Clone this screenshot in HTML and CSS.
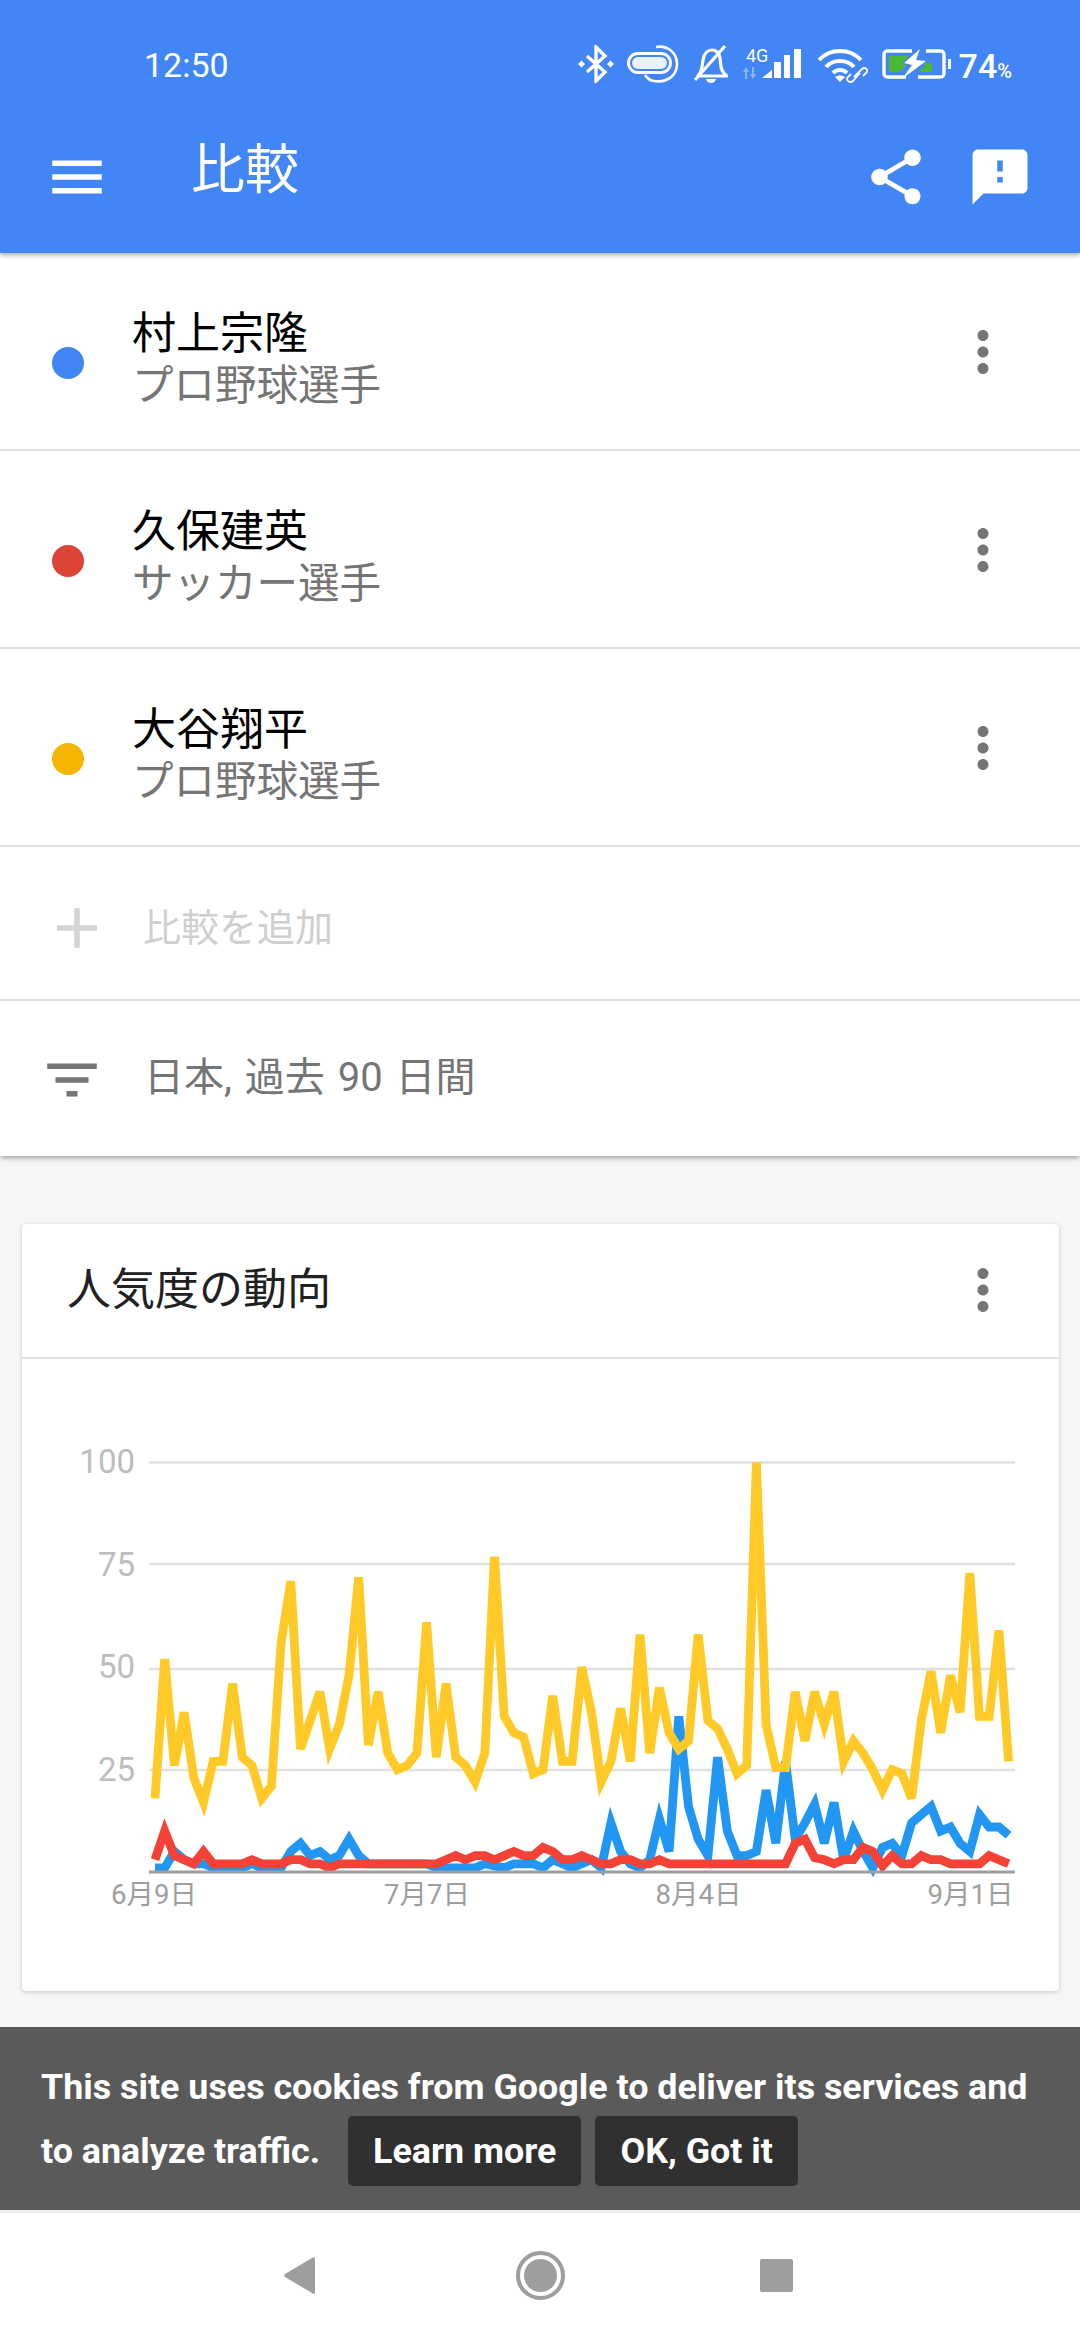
FILE: index.html
```html
<!DOCTYPE html>
<html lang="ja">
<head>
    <meta charset="utf-8">
    <title>比較</title>
    <link rel="stylesheet" href="styles.css">
</head>
<body>
<header class="appbar">
    <div class="status">
        <span class="clock">12:50</span>
        <div class="status-icons">
            <svg class="ic-bt" width="36" height="38" viewBox="0 0 36 38">
                <path d="M9 11 27 27 18 36V2L27 11 9 27" fill="none" stroke="#fff" stroke-width="3.4"/>
                <path d="M3.500 15.500 7 19 3.500 22.500 0 19zM32.500 15.500 36 19 32.500 22.500 29 19z" fill="#fff"/>
            </svg>
            <svg class="ic-pill" width="52" height="38" viewBox="0 0 52 38">
                <rect x="1.500" y="8.500" width="42" height="19" rx="9.500" fill="none" stroke="#fff" stroke-width="3"/>
                <rect x="5" y="12" width="35" height="12" rx="6" fill="#eaf1fe"/>
                <path d="M29 2C41 0 50 8 50 19S41 38 27 36C22 35.500 20 33 18 30" fill="none" stroke="#fff" stroke-width="2.600"/>
            </svg>
            <svg class="ic-bell" width="34" height="38" viewBox="0 0 34 38">
                <path d="M4 31C8 27 8 22 9 15 10 8 14 5 18 5 22 5 25 8 26 13L27 22C28 26 30 29 33 31Z" fill="none" stroke="#fff" stroke-width="3.200" stroke-linejoin="round"/>
                <path d="M1 35 31 1" stroke="#fff" stroke-width="3.200"/>
                <path d="M12 34H22C21 37 19 38 17 38 15 38 13 37 12 34Z" fill="#fff"/>
            </svg>
            <svg class="ic-signal" width="60" height="34" viewBox="0 0 60 34">
                <text class="net-label" x="5" y="15">4G</text>
                <path d="M5 20 8 25H6V32H4V25H2ZM12 32 9 27H11V20H13V27H15Z" fill="#fff" opacity=".4"/>
                <path d="M21 31 31 23V31ZM33 15H40V31H33ZM43 8H49V31H43ZM53 2H60V31H53Z" fill="#fff"/>
            </svg>
            <svg class="ic-wifi" width="51" height="36" viewBox="0 0 51 36">
                <path d="M2 12C13 0 33 0 44 12" fill="none" stroke="#fff" stroke-width="4"/>
                <path d="M9 19C16 11 30 11 37 19" fill="none" stroke="#fff" stroke-width="4"/>
                <path d="M16 25C20 21 26 21 30 25" fill="none" stroke="#fff" stroke-width="4"/>
                <path d="M23 34 18 29C21 27 25 27 28 29Z" fill="#fff"/>
                <path d="M37 29 45 21C49 18 52 23 49 25L46 28M43 25 36 33C32 36 28 31 31 29L34 26" fill="none" stroke="#fff" stroke-width="1.800"/>
            </svg>
            <svg class="ic-batt" width="69" height="30" viewBox="0 0 69 30">
                <path d="M30 2H6C3 2 2 3 2 6V24C2 27 3 28 6 28H24M44 2H58C61 2 62 3 62 6V24C62 27 61 28 58 28H36" fill="none" stroke="#fff" stroke-width="3.400"/>
                <path d="M7 7H27L20 14 24 17 17 23H7ZM42 14H50V23H36L43 17Z" fill="#4cb72f"/>
                <path d="M38 0 22 14 30 16 20 30 44 12 34 11Z" fill="#fff"/>
                <rect x="66" y="10" width="3" height="10" fill="#fff"/>
            </svg>
            <span class="batt-text">74<small>%</small></span>
        </div>
    </div>
    <div class="toolbar">
        <svg class="tool-icon menu" viewBox="0 0 24 24"><path d="M3 18h18v-2H3v2zm0-5h18v-2H3v2zm0-7v2h18V6H3z"/></svg>
        <h1>比較</h1>
        <svg class="tool-icon" viewBox="0 0 24 24"><path d="M18 16.080c-.76 0-1.440.3-1.960.77L8.910 12.700c.05-.23.09-.46.09-.7s-.04-.47-.09-.7l7.050-4.110c.54.5 1.250.81 2.040.81 1.660 0 3-1.340 3-3s-1.340-3-3-3-3 1.340-3 3c0 .24.04.47.09.7L8.040 9.810C7.500 9.310 6.790 9 6 9c-1.660 0-3 1.340-3 3s1.340 3 3 3c.79 0 1.500-.31 2.040-.81l7.120 4.160c-.05.21-.08.43-.08.65 0 1.610 1.310 2.920 2.920 2.920 1.610 0 2.920-1.310 2.920-2.920s-1.310-2.920-2.920-2.920z"/></svg>
        <svg class="tool-icon" viewBox="0 0 24 24"><path d="M20 2H4c-1.100 0-1.990.9-1.990 2L2 22l4-4h14c1.100 0 2-.9 2-2V4c0-1.100-.9-2-2-2zm-7 12h-2v-2h2v2zm0-4h-2V6h2v4z"/></svg>
    </div>
</header>

<main class="content">
    <section class="panel">
        <div class="term">
            <span class="dot dot-blue"></span>
            <div class="term-text">
                <div class="term-name">村上宗隆</div>
                <div class="term-sub">プロ野球選手</div>
            </div>
            <svg class="kebab" viewBox="0 0 24 24"><path d="M12 8c1.100 0 2-.9 2-2s-.9-2-2-2-2 .9-2 2 .9 2 2 2zm0 2c-1.100 0-2 .9-2 2s.9 2 2 2 2-.9 2-2-.9-2-2-2zm0 6c-1.100 0-2 .9-2 2s.9 2 2 2 2-.9 2-2-.9-2-2-2z"/></svg>
        </div>
        <div class="term">
            <span class="dot dot-red"></span>
            <div class="term-text">
                <div class="term-name">久保建英</div>
                <div class="term-sub">サッカー選手</div>
            </div>
            <svg class="kebab" viewBox="0 0 24 24"><path d="M12 8c1.100 0 2-.9 2-2s-.9-2-2-2-2 .9-2 2 .9 2 2 2zm0 2c-1.100 0-2 .9-2 2s.9 2 2 2 2-.9 2-2-.9-2-2-2zm0 6c-1.100 0-2 .9-2 2s.9 2 2 2 2-.9 2-2-.9-2-2-2z"/></svg>
        </div>
        <div class="term">
            <span class="dot dot-yellow"></span>
            <div class="term-text">
                <div class="term-name">大谷翔平</div>
                <div class="term-sub">プロ野球選手</div>
            </div>
            <svg class="kebab" viewBox="0 0 24 24"><path d="M12 8c1.100 0 2-.9 2-2s-.9-2-2-2-2 .9-2 2 .9 2 2 2zm0 2c-1.100 0-2 .9-2 2s.9 2 2 2 2-.9 2-2-.9-2-2-2zm0 6c-1.100 0-2 .9-2 2s.9 2 2 2 2-.9 2-2-.9-2-2-2z"/></svg>
        </div>
        <div class="add-row">
            <svg class="add-icon" viewBox="0 0 24 24"><path d="M19 13h-6v6h-2v-6H5v-2h6V5h2v6h6v2z"/></svg>
            <span>比較を追加</span>
        </div>
        <div class="filter-row">
            <svg class="filter-icon" viewBox="0 0 24 24"><path d="M10 18h4v-2h-4v2zM3 6v2h18V6H3zm3 7h12v-2H6v2z"/></svg>
            <span>日本, 過去 90 日間</span>
        </div>
    </section>

    <section class="card">
        <div class="card-head">
            <h2>人気度の動向</h2>
            <svg class="kebab" viewBox="0 0 24 24"><path d="M12 8c1.100 0 2-.9 2-2s-.9-2-2-2-2 .9-2 2 .9 2 2 2zm0 2c-1.100 0-2 .9-2 2s.9 2 2 2 2-.9 2-2-.9-2-2-2zm0 6c-1.100 0-2 .9-2 2s.9 2 2 2 2-.9 2-2-.9-2-2-2z"/></svg>
        </div>
        <svg class="chart" width="1037" height="632" viewBox="0 0 1037 632">
            <g class="grid">
                <line x1="127" x2="993" y1="103.500" y2="103.500"/>
                <line x1="127" x2="993" y1="205" y2="205"/>
                <line x1="127" x2="993" y1="310" y2="310"/>
                <line x1="127" x2="993" y1="411" y2="411"/>
            </g>
            <g class="y-labels">
                <text x="113" y="114">100</text>
                <text x="113" y="217">75</text>
                <text x="113" y="319">50</text>
                <text x="113" y="422">25</text>
            </g>
            <polyline id="line-blue" class="series s-blue"/>
            <polyline id="line-yellow" class="series s-yellow"/>
            <polyline id="line-red" class="series s-red"/>
            <line class="baseline" x1="127" x2="993" y1="513" y2="513"/>
            <g class="x-labels">
                <text x="132" y="545">6月9日</text>
                <text x="405" y="545">7月7日</text>
                <text x="676.500" y="545">8月4日</text>
                <text x="948.500" y="545">9月1日</text>
            </g>
        </svg>
    </section>
</main>

<div class="cookie">
    This site uses cookies from Google to deliver its services and to analyze traffic.
    <a class="cookie-btn">Learn more</a><a class="cookie-btn">OK, Got it</a>
</div>

<nav class="navbar">
    <svg width="31" height="37" viewBox="0 0 31 37"><path d="M31 2V35C31 37 29 37.500 28 36L1 20C0 19 0 18 1 17L28 1C29 0 31 0 31 2Z"/></svg>
    <svg class="nav-home" width="49" height="49" viewBox="0 0 49 49"><circle cx="24.500" cy="24.500" r="22.500" fill="none" stroke="#9e9e9e" stroke-width="4"/><circle cx="24.500" cy="24.500" r="16.500"/></svg>
    <svg width="33" height="33" viewBox="0 0 33 33"><rect width="33" height="33" rx="2"/></svg>
</nav>
<script src="chart.js"></script>
</body>
</html>
```

FILE: styles.css
```css
* {
    box-sizing: border-box;
    margin: 0;
    padding: 0;
}
html, body {
    width: 1080px;
    height: 2340px;
    overflow: hidden;
}
body {
    display: flex;
    flex-direction: column;
    font-family: "Noto Sans CJK JP", Roboto, sans-serif;
    background: #f6f6f6;
}

/* top bar */
.appbar {
    height: 253px;
    flex: none;
    background: #4285f4;
    color: #fff;
    box-shadow: 0 2px 5px rgba(0, 0, 0, .35);
    position: relative;
    z-index: 2;
}
.status {
    height: 144px;
    display: flex;
    justify-content: space-between;
    align-items: flex-start;
    padding: 45px 68px 0 144px;
    font-family: Roboto, sans-serif;
}
.clock {
    font-size: 34px;
    line-height: 40px;
}
.status-icons {
    display: flex;
    align-items: flex-start;
}
.ic-pill { margin-left: 13px; }
.ic-bell { margin-left: 15px; }
.ic-signal { margin-left: 13px; margin-top: 2px; }
.ic-wifi { margin-left: 16px; margin-top: 3px; }
.ic-batt { margin-left: 14px; margin-top: 4px; }
.net-label {
    font-family: Roboto, sans-serif;
    font-size: 18px;
    fill: #fff;
}
.batt-text {
    font-size: 34px;
    line-height: 40px;
    margin-left: 8px;
    margin-top: 1px;
    font-weight: 500;
}
.batt-text small {
    font-size: 20px;
}
.toolbar {
    display: flex;
    align-items: flex-start;
    padding: 0 47px 0 44px;
}
.tool-icon {
    width: 66px;
    height: 66px;
    fill: #fff;
    flex: none;
    margin-left: 38px;
}
.tool-icon.menu {
    margin-left: 0;
}
.toolbar h1 {
    font-size: 54px;
    font-weight: 400;
    line-height: 60px;
    margin-left: 81px;
    flex: 1;
    margin-top: -8px;
}

/* terms panel */
.content {
    flex: 1;
    overflow: hidden;
}
.panel {
    background: #fff;
    box-shadow: 0 2px 5px rgba(0, 0, 0, .35);
}
.term {
    height: 198px;
    display: flex;
    align-items: flex-start;
    padding: 0 64px 0 52px;
    border-bottom: 2px solid #e0e0e0;
}
.dot {
    width: 32px;
    height: 32px;
    border-radius: 50%;
    margin-top: 94px;
    flex: none;
}
.dot-blue { background: #4285f4; }
.dot-red { background: #db4437; }
.dot-yellow { background: #f4b400; }
.term-text {
    flex: 1;
    margin-left: 48px;
    padding-top: 52px;
}
.term-name {
    font-size: 44px;
    line-height: 50px;
    color: #000;
}
.term-sub {
    font-size: 41.500px;
    line-height: 52px;
    margin-top: 1px;
    color: #757575;
}
.kebab {
    width: 66px;
    height: 66px;
    fill: #757575;
    flex: none;
    margin-top: 66px;
}
.add-row {
    height: 154px;
    display: flex;
    align-items: center;
    padding-left: 43px;
    border-bottom: 2px solid #e0e0e0;
    font-size: 38px;
    color: #cfcfcf;
}
.add-icon {
    width: 68px;
    height: 68px;
    fill: #d4d4d4;
    margin-right: 32px;
    margin-top: 10px;
}
.add-row span {
    margin-top: 3px;
}
.filter-row {
    height: 155px;
    display: flex;
    align-items: center;
    padding-left: 39px;
    font-family: Roboto, "Noto Sans CJK JP", sans-serif;
    font-size: 40px;
    word-spacing: 3px;
    color: #757575;
}
.filter-icon {
    width: 66px;
    height: 66px;
    fill: #757575;
    margin-right: 39px;
    margin-top: 3px;
}
.filter-row span {
    margin-top: -9px;
}

/* chart card */
.card {
    margin: 68px 21px 0 22px;
    height: 767px;
    background: #fff;
    border-radius: 4px;
    box-shadow: 0 1px 4px rgba(0, 0, 0, .2);
}
.card-head {
    height: 135px;
    display: flex;
    align-items: flex-start;
    padding: 0 43px 0 45px;
    border-bottom: 2px solid #e0e0e0;
}
.card-head h2 {
    flex: 1;
    font-size: 44px;
    font-weight: 400;
    line-height: 60px;
    color: #212121;
    margin-top: 32px;
}
.card-head .kebab {
    margin-top: 33px;
}
.chart {
    display: block;
}
.grid line {
    stroke: #e0e0e0;
    stroke-width: 2.500;
}
.baseline {
    stroke: #9e9e9e;
    stroke-width: 3;
}
.y-labels text {
    font-family: Roboto, sans-serif;
    font-size: 33px;
    fill: #bdbdbd;
    text-anchor: end;
}
.x-labels text {
    font-family: Roboto, "Noto Sans CJK JP", sans-serif;
    font-size: 27.500px;
    fill: #9e9e9e;
    text-anchor: middle;
}
.series {
    fill: none;
    stroke-width: 8.800;
}
.s-blue { stroke: #2196f3; }
.s-yellow { stroke: #ffca28; }
.s-red { stroke: #f44336; }

/* cookie notice */
.cookie {
    height: 183px;
    flex: none;
    background: #5a5a5a;
    color: #fff;
    font-family: Roboto, sans-serif;
    font-weight: 700;
    font-size: 35.850px;
    line-height: 64px;
    padding: 28px 30px 0 41px;
}
.cookie-btn {
    display: inline-block;
    height: 70px;
    line-height: 70px;
    padding: 0 25px;
    margin-left: 19px;
    background: #303030;
    border-radius: 5px;
    vertical-align: middle;
    margin-top: -6px;
}
.cookie-btn + .cookie-btn {
    margin-left: 14px;
}

/* android nav */
.navbar {
    height: 130px;
    flex: none;
    background: #fff;
    border-top: 3px solid #ececec;
    display: flex;
    align-items: center;
    padding: 0 0 2px 284px;
    fill: #9e9e9e;
}
.nav-home {
    margin: 0 195px 0 201px;
}
```

FILE: chart.js
```js
// values read off the trends chart, one per day
const blue = [1, 1, 5, 3, 2, 2, 1, 1, 1, 1, 2, 1, 1, 1, 5, 7, 4, 5, 3, 4, 8, 4, 2, 2, 2, 2, 2, 2, 2,
    1, 1, 1, 1, 1, 2, 1.5, 1, 2, 2, 2, 1, 3, 2, 1, 2, 3, 1, 12, 5, 2, 1, 3, 13, 5, 38, 16, 8, 4, 28,
    10, 4, 4, 5, 20, 7, 27, 8, 12, 16.5, 7, 17, 3, 10, 5, 1, 6, 7, 4, 12, 14, 16, 10, 11, 7, 5, 14, 11, 11, 9];
const yellow = [18, 52, 26, 39, 23, 17, 27, 27, 46, 28, 26, 18, 21, 56, 71, 30, 37, 44, 30, 36, 48, 72, 31, 44, 29,
    25, 26, 29, 61, 28, 46, 28, 26, 22, 29, 77, 38, 34, 33, 24, 25, 43, 27, 27, 50, 39, 22, 27, 40, 27, 58, 29,
    45, 34, 30, 32, 58, 37, 35, 30, 24, 26, 100, 36, 25.5, 25.5, 44, 32, 44, 36, 44, 27, 32, 29, 25, 20, 25, 24, 18,
    37, 49, 34, 48, 39, 73, 38, 38, 59, 27];
const red = [3, 10, 4, 3, 2, 5, 2, 2, 2, 2, 3, 2, 2, 2, 3, 3, 2, 2, 1, 2, 2, 2, 2, 2, 2, 2, 2, 2, 2, 2, 3, 4, 3, 4, 4,
    3, 4, 5, 4, 4, 6, 5, 3, 3, 4, 3, 2, 2, 3, 3, 2, 2, 3, 2, 2, 2, 2, 2, 2, 2, 2, 2, 2, 2, 2, 2, 7, 8, 3.5, 3, 2, 3, 3,
    6, 5, 1.5, 4, 2, 2, 4, 3, 3, 2, 2, 2, 2, 4, 3, 2];

function toPoints(values) {
    return values.map((v, i) => (133 + 9.7 * i).toFixed(1) + ',' + (513 - v * 4.095).toFixed(1)).join(' ');
}

document.getElementById('line-blue').setAttribute('points', toPoints(blue));
document.getElementById('line-yellow').setAttribute('points', toPoints(yellow));
document.getElementById('line-red').setAttribute('points', toPoints(red));
```
